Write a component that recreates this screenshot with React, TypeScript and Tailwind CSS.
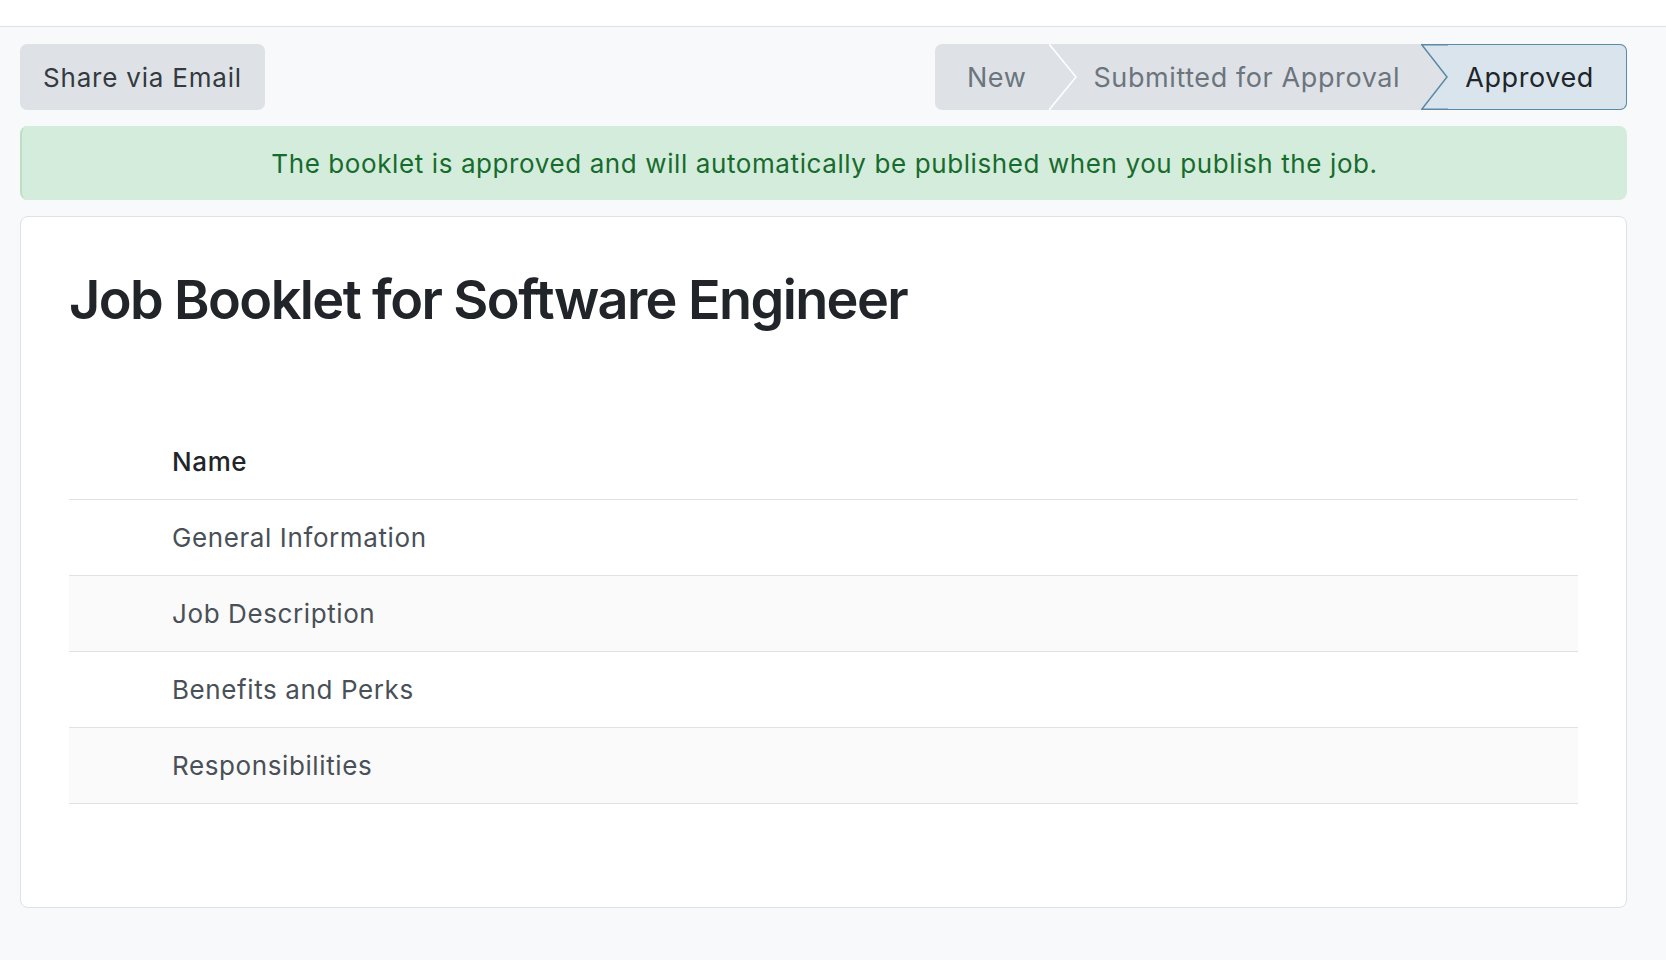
import React from "react";

const SECTIONS = [
  "General Information",
  "Job Description",
  "Benefits and Perks",
  "Responsibilities",
];

function StatusStepper() {
  return (
    <div className="flex h-[66px] items-stretch rounded-[7px] bg-[#dee2e6] text-[27px] tracking-[0.6px]">
      <div className="flex items-center pl-[32px] pr-[23px] pt-[2px] text-[#6c757d]">New</div>
      <svg width="28" height="66" viewBox="0 0 28 66" className="shrink-0">
        <polyline points="0,0 27,33 0,66" fill="none" stroke="#ffffff" strokeWidth="1.6" />
      </svg>
      <div className="flex items-center pl-[16px] pr-[21px] pt-[2px] text-[#6c757d]">
        Submitted for Approval
      </div>
      {/* current step */}
      <div className="flex items-stretch">
        <svg width="27" height="66" viewBox="0 0 27 66" className="shrink-0">
          <polygon points="0,0.75 27,0.75 27,65.25 0,65.25 26,33" fill="#d9e4ec" />
          <polyline
            points="27,0.75 0.75,0.75 26,33 0.75,65.25 27,65.25"
            fill="none"
            stroke="#5b89a6"
            strokeWidth="1.5"
          />
        </svg>
        <div className="flex items-center rounded-r-[7px] border-y-[1.5px] border-r-[1.5px] border-[#5b89a6] bg-[#d9e4ec] pl-[17px] pr-[32px] pt-[2px] text-[#212529]">
          Approved
        </div>
      </div>
    </div>
  );
}

export default function App() {
  return (
    <div
      className="min-h-[960px] bg-[#f8f9fa]"
      style={{ fontFamily: "Inter, 'Noto Sans', sans-serif" }}
    >
      <div className="h-[27px] border-b border-[#dfe1e4] bg-white" />

      <div className="ml-[20px] w-[1607px] pt-[17px]">
        <div className="flex items-center justify-between">
          <button className="flex h-[66px] items-center rounded-[7px] bg-[#dee2e6] px-[23px] text-[26px] tracking-[0.8px] text-[#343a40]">
            Share via Email
          </button>
          <StatusStepper />
        </div>

        <div className="mt-[16px] flex h-[74px] items-center justify-center rounded-[8px] border-l-2 border-[#bcdec6] bg-[#d4ecdb] text-[26px] tracking-[0.6px] text-[#176b2d]">
          The booklet is approved and will automatically be published when you publish the job.
        </div>

        <div className="mt-[16px] h-[692px] rounded-[8px] border border-[#dee2e6] bg-white p-[48px]">
          <h1 className="mt-[3px] text-[54px] font-semibold leading-[1.2] tracking-[-1.6px] text-[#212529]">
            Job Booklet for Software Engineer
          </h1>

          <table className="mt-[91px] w-full border-collapse text-[26px] leading-[39px] tracking-[0.6px]">
            <thead>
              <tr className="border-b border-[#dee2e6]">
                <th className="py-[18px] pl-[103px] text-left font-medium text-[#212529]">Name</th>
              </tr>
            </thead>
            <tbody>
              {SECTIONS.map((s, i) => (
                <tr
                  key={s}
                  className={`border-b border-[#dee2e6] ${i % 2 === 1 ? "bg-[#fafafa]" : "bg-white"}`}
                >
                  <td className="py-[18px] pl-[103px] text-[#495057]">{s}</td>
                </tr>
              ))}
            </tbody>
          </table>
        </div>
      </div>
    </div>
  );
}
